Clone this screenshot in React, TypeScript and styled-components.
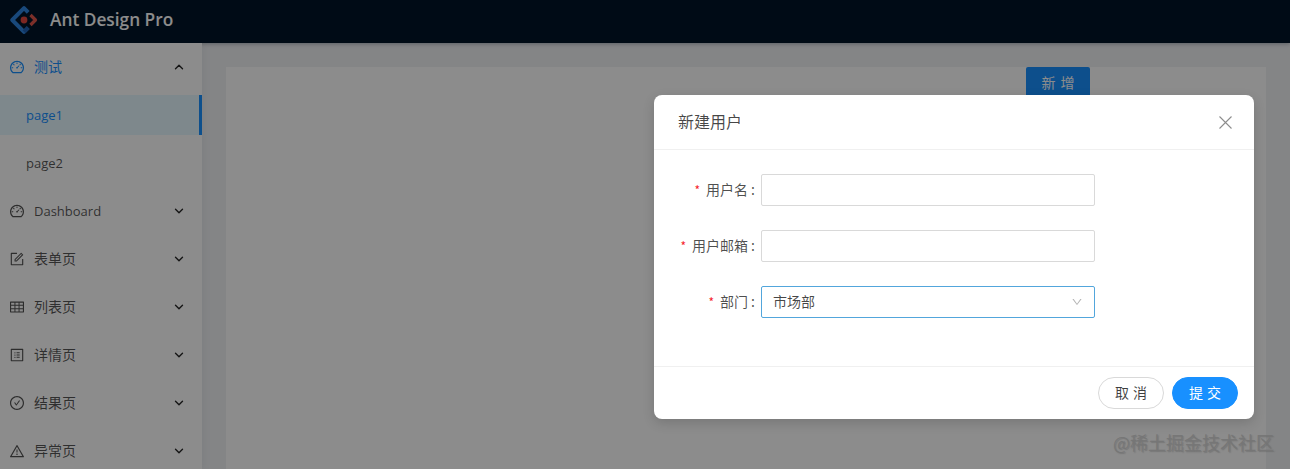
import React from 'react';
import styled, { createGlobalStyle } from 'styled-components';
import { ChevronDown, ChevronUp } from 'lucide-react';
import {
  AiOutlineDashboard,
  AiOutlineForm,
  AiOutlineTable,
  AiOutlineProfile,
  AiOutlineCheckCircle,
  AiOutlineWarning,
  AiOutlineDown,
} from 'react-icons/ai';

const Global = createGlobalStyle`
  html, body { margin: 0; padding: 0; height: 100%; overflow: hidden; background: #f0f2f5; }
  body { font-family: "Open Sans", "Noto Sans CJK SC", sans-serif; font-size: 14px; color: rgba(0,0,0,.85); }
  #root { height: 100%; }
`;

const cjk = `"Noto Sans CJK SC", sans-serif`;

const Page = styled.div`
  position: relative;
  width: 1290px;
  height: 469px;
  overflow: hidden;
  display: flex;
  flex-direction: column;
`;
const Header = styled.header`
  flex: 0 0 43px;
  box-sizing: border-box;
  background: #001529;
  display: flex;
  align-items: center;
  padding: 0 0 4px 9px;
  gap: 11px;
  box-shadow: 0 1px 4px rgba(0,21,41,.3);
`;
const Brand = styled.h1`
  margin: 0;
  color: #fff;
  font-size: 17.3px;
  font-weight: 600;
  font-family: "Open Sans", sans-serif;
`;
const Body = styled.div`
  flex: 1;
  display: flex;
  min-height: 0;
`;
const Sider = styled.nav`
  flex: 0 0 202px;
  background: #fff;
  box-shadow: 2px 0 8px rgba(29,35,41,.05);
`;
const Row = styled.div<{ $open?: boolean }>`
  height: 48px;
  display: flex;
  align-items: center;
  box-sizing: border-box;
  padding: 0 16px 2px 9px;
  gap: 9px;
  font: 14px ${cjk};
  color: ${p => (p.$open ? '#1890ff' : 'rgba(0,0,0,.68)')};
  svg { flex: none; margin-top: 2px; }
`;
const RowLabel = styled.span<{ $latin?: boolean }>`
  flex: 1;
  ${p => p.$latin && `font: 13px "Open Sans", sans-serif; margin-top: 2px;`}
`;
const SubRow = styled.div<{ $active?: boolean }>`
  height: ${p => (p.$active ? 40 : 48)}px;
  margin-bottom: ${p => (p.$active ? 4 : 0)}px;
  margin-top: ${p => (p.$active ? 4 : 0)}px;
  display: flex;
  align-items: center;
  box-sizing: border-box;
  padding-left: 26px;
  font: 13px "Open Sans", sans-serif;
  color: ${p => (p.$active ? '#1890ff' : 'rgba(0,0,0,.68)')};
  background: ${p => (p.$active ? '#e6f7ff' : 'transparent')};
  border-right: ${p => (p.$active ? '3px solid #1890ff' : 'none')};
`;
const Arrow = styled.span`
  display: flex;
  color: rgba(0,0,0,.85);
`;
const Content = styled.main`
  flex: 1;
  padding: 24px 24px 0;
  min-width: 0;
`;
const Card = styled.section`
  height: 100%;
  background: #fff;
  display: flex;
  justify-content: flex-end;
  align-items: flex-start;
  padding-right: 176px;
`;
const AddButton = styled.button`
  width: 64px;
  height: 32px;
  border: 0;
  border-radius: 2px;
  background: #1890ff;
  color: #fff;
  font: 14px ${cjk};
  letter-spacing: 5px;
  padding: 0 0 3px 5px;
`;
const Mask = styled.div`
  position: absolute;
  inset: 0;
  background: rgba(0,0,0,.45);
`;
const Modal = styled.div`
  position: absolute;
  left: 654px;
  top: 95px;
  width: 600px;
  height: 324px;
  background: #fff;
  border-radius: 8px;
  display: flex;
  flex-direction: column;
  box-shadow: 0 4px 12px rgba(0,0,0,.15);
`;
const ModalHeader = styled.div`
  flex: 0 0 54px;
  border-bottom: 1px solid #f0f0f0;
  display: flex;
  align-items: center;
  justify-content: space-between;
  padding: 0 22px 0 24px;
`;
const ModalTitle = styled.div`
  font: 16px ${cjk};
  color: rgba(0,0,0,.72);
  padding-bottom: 2px;
`;
const CloseIcon = styled.svg`
  width: 13px;
  height: 13px;
  stroke: rgba(0,0,0,.45);
  stroke-width: 1.1;
  fill: none;
`;
const Form = styled.form`
  flex: 1;
  padding-top: 24px;
  display: flex;
  flex-direction: column;
  gap: 24px;
`;
const FormRow = styled.div`
  display: flex;
  align-items: center;
  height: 32px;
`;
const Label = styled.label`
  flex: 0 0 107px;
  box-sizing: border-box;
  padding: 0 6px 3px 0;
  text-align: right;
  font: 14px ${cjk};
  color: rgba(0,0,0,.7);
`;
const Star = styled.span`
  color: #f5222d;
  margin-right: 6px;
  font-size: 12px;
`;
const Colon = styled.span`
  margin-left: 3px;
`;
const Input = styled.div<{ $focus?: boolean }>`
  width: 334px;
  height: 32px;
  box-sizing: border-box;
  border: 1px solid ${p => (p.$focus ? '#52a6dc' : '#d9d9d9')};
  border-radius: 2px;
  display: flex;
  align-items: center;
  justify-content: space-between;
  padding: 0 11px 2px;
  font: 14px ${cjk};
  color: rgba(0,0,0,.72);
`;
const SelectArrow = styled.span`
  display: flex;
  color: rgba(0,0,0,.3);
  margin-top: 2px;
`;
const Footer = styled.div`
  flex: 0 0 52px;
  border-top: 1px solid #f0f0f0;
  display: flex;
  align-items: center;
  justify-content: flex-end;
  gap: 8px;
  padding: 0 16px;
`;
const FooterButton = styled.button<{ $primary?: boolean }>`
  width: 66px;
  height: 32px;
  padding: 0 0 2px 4px;
  border-radius: 16px;
  border: 1px solid ${p => (p.$primary ? '#1890ff' : '#d9d9d9')};
  background: ${p => (p.$primary ? '#1890ff' : '#fff')};
  color: ${p => (p.$primary ? '#fff' : 'rgba(0,0,0,.75)')};
  font: 14px ${cjk};
  letter-spacing: 4px;
`;
const Watermark = styled.div`
  position: absolute;
  right: 16px;
  top: 430px;
  font: 400 18px/24px ${cjk};
  color: rgba(118,118,118,.95);
  text-shadow: 1px 1px 1px rgba(80,80,80,.35);
  white-space: nowrap;
`;

const Logo = () => (
  <svg width="30" height="30" viewBox="0 0 30 30" fill="none">
    <path d="M19.2 7.4L15 3.2 3.2 15 15 26.8l4.2-4.2" stroke="#2f85e0" strokeWidth="4" strokeLinejoin="round" />
    <path d="M15 26.8l4.2-4.2" stroke="#1f62b4" strokeWidth="4" />
    <path d="M21.5 10l5 5-5 5" stroke="#e2574c" strokeWidth="3.2" strokeLinejoin="round" />
    <circle cx="15" cy="15" r="3.4" fill="#e2473f" />
  </svg>
);

const items = [
  { label: '表单页', icon: <AiOutlineForm size={16} /> },
  { label: '列表页', icon: <AiOutlineTable size={16} /> },
  { label: '详情页', icon: <AiOutlineProfile size={16} /> },
  { label: '结果页', icon: <AiOutlineCheckCircle size={16} /> },
  { label: '异常页', icon: <AiOutlineWarning size={16} /> },
];

const Down = () => (
  <Arrow>
    <ChevronDown size={14} strokeWidth={2.4} />
  </Arrow>
);

export default function App() {
  return (
    <Page>
      <Global />
      <Header>
        <Logo />
        <Brand>Ant Design Pro</Brand>
      </Header>
      <Body>
        <Sider>
          <Row $open>
            <AiOutlineDashboard size={16} />
            <RowLabel>测试</RowLabel>
            <Arrow>
              <ChevronUp size={14} strokeWidth={2.4} />
            </Arrow>
          </Row>
          <SubRow $active>page1</SubRow>
          <SubRow>page2</SubRow>
          <Row>
            <AiOutlineDashboard size={16} />
            <RowLabel $latin>Dashboard</RowLabel>
            <Down />
          </Row>
          {items.map(i => (
            <Row key={i.label}>
              {i.icon}
              <RowLabel>{i.label}</RowLabel>
              <Down />
            </Row>
          ))}
        </Sider>
        <Content>
          <Card>
            <AddButton>新增</AddButton>
          </Card>
        </Content>
      </Body>
      <Mask />
      <Modal>
        <ModalHeader>
          <ModalTitle>新建用户</ModalTitle>
          <CloseIcon viewBox="0 0 13 13">
            <path d="M.5.5l12 12M12.5.5l-12 12" />
          </CloseIcon>
        </ModalHeader>
        <Form>
          <FormRow>
            <Label><Star>*</Star>用户名<Colon>:</Colon></Label>
            <Input />
          </FormRow>
          <FormRow>
            <Label><Star>*</Star>用户邮箱<Colon>:</Colon></Label>
            <Input />
          </FormRow>
          <FormRow>
            <Label><Star>*</Star>部门<Colon>:</Colon></Label>
            <Input $focus>
              市场部
              <SelectArrow><AiOutlineDown size={12} /></SelectArrow>
            </Input>
          </FormRow>
        </Form>
        <Footer>
          <FooterButton>取消</FooterButton>
          <FooterButton $primary>提交</FooterButton>
        </Footer>
      </Modal>
      <Watermark>@稀土掘金技术社区</Watermark>
    </Page>
  );
}
